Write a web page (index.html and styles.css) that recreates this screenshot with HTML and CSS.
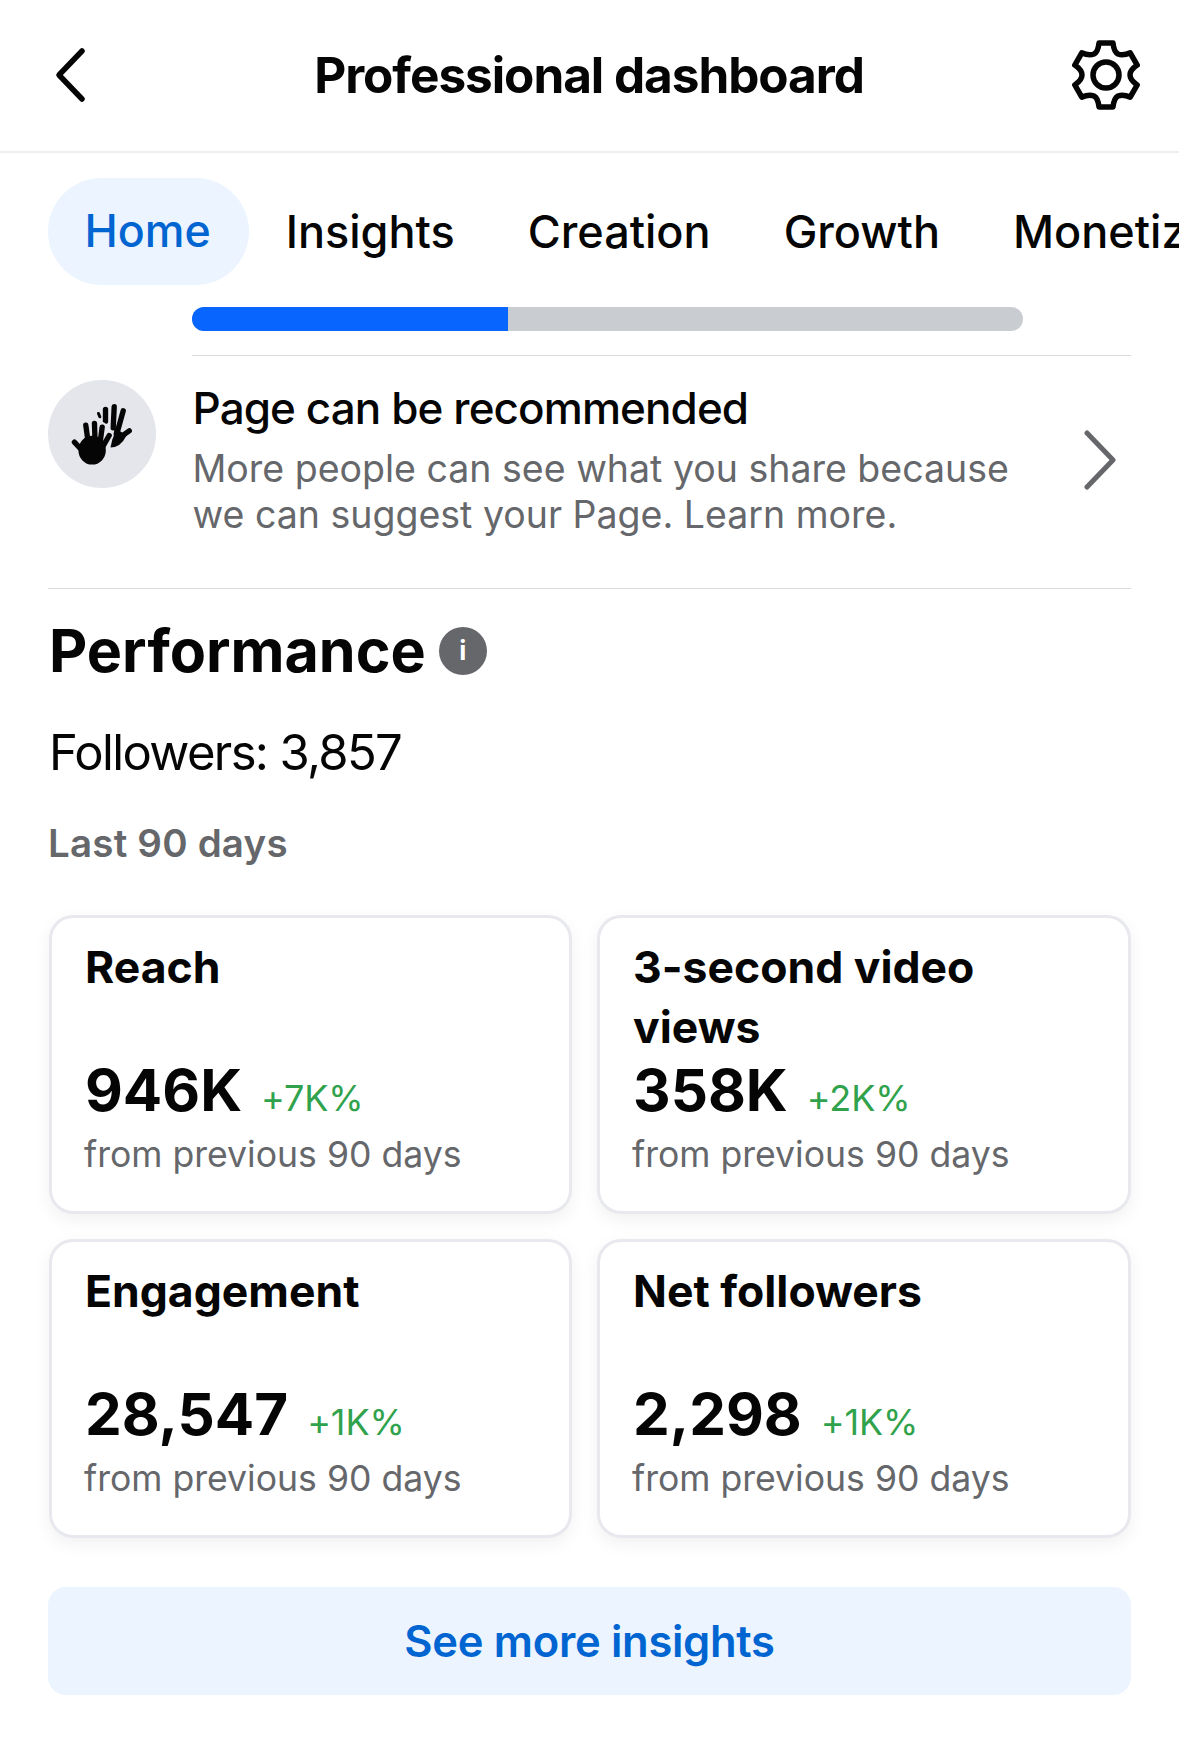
FILE: index.html

```html
<!DOCTYPE html>
<html lang="en">
<head>
  <meta charset="UTF-8" />
  <meta name="viewport" content="width=device-width, initial-scale=1.0"/>
  <title>Professional dashboard</title>
  <link rel="stylesheet" href="styles.css">
</head>
<body>
  <header class="topbar">
    <svg class="back-icon" viewBox="0 0 32 58" fill="none" stroke="#050505" stroke-width="5.5" stroke-linecap="round" stroke-linejoin="round">
      <path d="M28 5 L5 29 L28 53"/>
    </svg>
    <h1>Professional dashboard</h1>
    <svg class="gear-icon" viewBox="-3 -3 72 76" fill="none" stroke="#050505" stroke-width="5.5" stroke-linejoin="round">
      <path d="M26 3 H40 Q41 12 45 14 Q50 16 57.2 12.9 L64.2 25.1 Q57 30 57 35 Q57 40 64.2 44.9 L57.2 57.1 Q50 54 45 56 Q41 58 40 67 H26 Q25 58 21 56 Q16 54 8.8 57.1 L1.8 44.9 Q9 40 9 35 Q9 30 1.8 25.1 L8.8 12.9 Q16 16 21 14 Q25 12 26 3 Z"/>
      <circle cx="33" cy="35" r="13"/>
    </svg>
  </header>

  <nav class="tabs">
    <a class="tab active">Home</a>
    <a class="tab">Insights</a>
    <a class="tab">Creation</a>
    <a class="tab">Growth</a>
    <a class="tab">Monetization</a>
  </nav>

  <div class="progress"><div class="progress-fill"></div></div>

  <section class="recommend">
    <div class="hand-circle">
      <svg viewBox="85 62 323 323" fill="none" stroke-linecap="round">
        <!-- back hand -->
        <g stroke="#050505" stroke-width="16">
          <path d="M257 150 L257 185"/>
          <path d="M283 142 L280 205"/>
          <path d="M310 154 L293 215"/>
          <path d="M328 214 L298 235"/>
        </g>
        <path d="M272 264 Q302 264 320 228 L285 205 Z" fill="#050505"/>
        <path d="M236 162 L240 172" stroke="#050505" stroke-width="9"/>
        <!-- gap around the front hand -->
        <g stroke="#e4e6eb" stroke-width="25">
          <path d="M224 250 L224 192"/>
          <path d="M243 255 L247 200"/>
          <path d="M245 265 L269 228"/>
        </g>
        <!-- front hand -->
        <g stroke="#050505" stroke-width="16">
          <path d="M180 265 L164 248"/>
          <path d="M207 262 L198 197"/>
          <path d="M226 255 L224 192"/>
          <path d="M240 255 L247 203"/>
          <path d="M245 268 L268 228"/>
        </g>
        <ellipse cx="217" cy="272" rx="41" ry="43" fill="#050505"/>
      </svg>
    </div>
    <div class="recommend-text">
      <div class="recommend-title">Page can be recommended</div>
      <p>More people can see what you share because we can suggest your Page. Learn more.</p>
    </div>
    <svg class="chevron-icon" viewBox="0 0 34 60" fill="none" stroke="#65676b" stroke-width="5" stroke-linecap="round" stroke-linejoin="round">
      <path d="M4 3 L30 30 L4 57"/>
    </svg>
  </section>

  <main class="performance">
    <h2>Performance <span class="info-icon">i</span></h2>
    <div class="followers">Followers: 3,857</div>
    <div class="period">Last 90 days</div>

    <div class="cards">
      <div class="card">
        <div class="card-title">Reach</div>
        <div class="card-value"><strong>946K</strong><span class="change">+7K%</span></div>
        <div class="card-note">from previous 90 days</div>
      </div>
      <div class="card">
        <div class="card-title">3-second video views</div>
        <div class="card-value"><strong>358K</strong><span class="change">+2K%</span></div>
        <div class="card-note">from previous 90 days</div>
      </div>
      <div class="card">
        <div class="card-title">Engagement</div>
        <div class="card-value"><strong>28,547</strong><span class="change">+1K%</span></div>
        <div class="card-note">from previous 90 days</div>
      </div>
      <div class="card">
        <div class="card-title">Net followers</div>
        <div class="card-value"><strong>2,298</strong><span class="change">+1K%</span></div>
        <div class="card-note">from previous 90 days</div>
      </div>
    </div>

    <button class="more-btn">See more insights</button>
  </main>
</body>
</html>
```

FILE: styles.css

```css
body {
  font-family: 'Inter', 'Liberation Sans', sans-serif;
  background-color: #fff;
  color: #050505;
  margin: 0;
  overflow-x: hidden;
}
.topbar {
  height: 149px;
  border-bottom: 2px solid #eeeeee;
  display: flex;
  align-items: center;
  justify-content: space-between;
  padding: 0 37px 2px 54px;
}
.back-icon {
  width: 32px;
  height: 58px;
}
.gear-icon {
  width: 72px;
  height: 76px;
}
.topbar h1 {
  font-size: 49.5px;
  font-weight: 700;
  letter-spacing: -1.05px;
  margin: 0 0 0 22px;
}
.tabs {
  display: flex;
  align-items: center;
  margin-top: 25px;
  padding-left: 48px;
  white-space: nowrap;
}
.tab {
  font-size: 45px;
  font-weight: 500;
  padding: 0 36.5px;
  line-height: 107px;
  border-radius: 54px;
}
.tab.active {
  font-size: 44.7px;
  padding: 0 38.5px 0 36.5px;
  background: #ebf4ff;
  color: #0064d1;
}
.progress {
  margin: 22px 0 0 192px;
  width: 831px;
  height: 24px;
  background: #c9ccd1;
  border-radius: 12px;
  overflow: hidden;
}
.progress-fill {
  width: 316px;
  height: 100%;
  background: #0866ff;
}
.recommend {
  margin: 24px 48px 0;
  height: 233px;
  display: flex;
  align-items: flex-start;
  position: relative;
  border-bottom: 1px solid #dcdcdc;
}
.recommend::before {
  content: "";
  position: absolute;
  left: 144px;
  right: 0;
  top: 0;
  border-top: 1px solid #dcdcdc;
}
.hand-circle {
  width: 108px;
  height: 108px;
  margin-top: 25px;
  border-radius: 50%;
  background: #e4e6eb;
  flex: none;
}
.hand-circle svg {
  display: block;
  width: 108px;
  height: 108px;
}
.recommend-text {
  margin: 24px 0 0 36.5px;
  width: 830px;
}
.recommend-title {
  font-size: 44px;
  font-weight: 450;
  line-height: 58px;
  letter-spacing: -0.9px;
}
.recommend-text p {
  margin: 9px 0 0;
  font-size: 37.5px;
  line-height: 46px;
  color: #65676b;
}
.chevron-icon {
  width: 34px;
  height: 60px;
  margin: 75px 14px 0 auto;
  flex: none;
}
.performance {
  padding: 0 48px;
}
.performance h2 {
  font-size: 59.2px;
  font-weight: 700;
  line-height: 72px;
  margin: 26px 0 0 1px;
  display: flex;
  align-items: center;
  gap: 13px;
}
.info-icon {
  width: 48px;
  height: 48px;
  border-radius: 50%;
  background: #65676b;
  color: #fff;
  font-size: 26px;
  display: flex;
  align-items: center;
  justify-content: center;
}
.followers {
  font-size: 49px;
  letter-spacing: -1.65px;
  line-height: 60px;
  margin: 36px 0 0 1px;
}
.period {
  font-size: 38.5px;
  font-weight: 600;
  color: #65676b;
  letter-spacing: 0.2px;
  line-height: 46px;
  margin: 37px 0 0 0;
}
.cards {
  display: grid;
  grid-template-columns: 523px 534px;
  gap: 25px;
  margin: 49px 0 0 1px;
}
.card {
  height: 299px;
  box-sizing: border-box;
  border: 3px solid #e8e9ee;
  border-radius: 24px;
  background: #fff;
  box-shadow: 0 6px 18px rgba(0,0,0,0.06);
  padding: 19px 33px;
}
.card-title {
  font-size: 44.5px;
  font-weight: 650;
  line-height: 60px;
  height: 120px;
}
.card-value {
  display: flex;
  align-items: baseline;
  gap: 19px;
  line-height: 66px;
}
.card-value strong {
  font-size: 58.3px;
  font-weight: 700;
}
.change {
  font-size: 36px;
  letter-spacing: -0.1px;
  color: #31a24c;
}
.card-note {
  font-size: 35.6px;
  line-height: 46px;
  color: #65676b;
  margin: 1px 0 0 -1px;
}
.more-btn {
  display: block;
  width: 100%;
  height: 108px;
  margin-top: 49px;
  padding-bottom: 2px;
  border: none;
  border-radius: 18px;
  background: #ebf4ff;
  color: #0064d1;
  font-family: inherit;
  font-size: 43.5px;
  font-weight: 600;
  letter-spacing: -0.3px;
}
```
